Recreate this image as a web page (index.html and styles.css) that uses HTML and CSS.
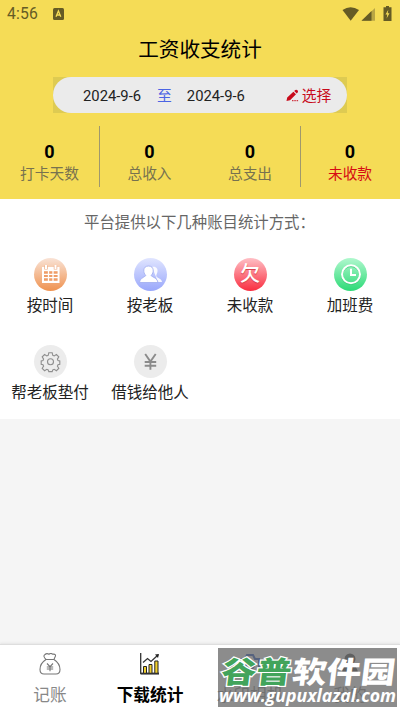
FILE: index.html
```html
<!DOCTYPE html>
<html lang="zh-CN">
<head>
<meta charset="utf-8">
<title>工资收支统计</title>
<link rel="stylesheet" href="styles.css">
</head>
<body>
<div class="app">
  <header class="header">
    <div class="status">
      <span class="time">4:56</span>
      <svg class="badge" width="11" height="12" viewBox="0 0 11 12"><rect width="11" height="12" rx="1.5" fill="#655b25"/><path d="M3 8.7 5.4 3 7.8 8.7M3.8 7h3.2" fill="none" stroke="#f5dc56" stroke-width="1.3"/></svg>
      <svg class="signals" width="52" height="16" viewBox="0 0 52 16"><path d="M.5 4Q8.500-1.500 17 4L8.700 14.700Z" fill="#655b25"/><path d="M19.500 14.700 33 2V14.700Z" fill="#b9a644"/><path d="M19.500 14.700 29.500 5V14.700Z" fill="#655b25"/><path d="M44 0h3v1.200h2.500V15h-8V1.200H44Z" fill="#655b25"/><path d="M46.300 3.700 43.500 8.500h1.800l-.7 4 2.900-5.300h-1.800Z" fill="#f5dc56"/></svg>
    </div>
    <h1 class="title">工资收支统计</h1>
    <div class="range-wrap">
      <div class="range">
        <span class="date">2024-9-6</span><span class="to">至</span><span class="date">2024-9-6</span>
        <svg class="pencil" width="13" height="13" viewBox="0 0 13 13"><path d="M.5 12 1.200 8.500 7.400 2.700 10 5.200 4 11.200ZM8.200 2 9.300 1Q10.500.2 11.500 1.200T11.700 3.500L10.700 4.500Z" fill="#c80b1b"/><path d="M6 11.700h6.500" stroke="#c80b1b" stroke-dasharray="1.500 .8"/></svg>
        <span class="pick">选择</span>
      </div>
    </div>
    <div class="stats">
      <div class="stat"><b>0</b><span>打卡天数</span></div>
      <div class="stat ruled"><b>0</b><span>总收入</span></div>
      <div class="stat"><b>0</b><span>总支出</span></div>
      <div class="stat ruled due"><b>0</b><span>未收款</span></div>
    </div>
  </header>
  <main class="methods">
    <p class="intro">平台提供以下几种账目统计方式：</p>
    <div class="grid">
      <div class="item"><div class="disc orange"><svg width="33" height="33" viewBox="0 0 33 33"><path d="M8 9h17.500v16H8Z" fill="#fff"/><path d="M10 13.200h13.600v9.600H10Z" fill="#ef9d67"/><path d="M10 16.400h14M10 19.600h14M14.500 13v10M19 13v10" stroke="#fff" stroke-width="1.300"/><path d="M12 7.500v4M21.500 7.500v4" stroke="#eeb18c" stroke-width="3.500"/><path d="M12 7v4M21.500 7v4" stroke="#fff" stroke-width="2"/></svg></div><span>按时间</span></div>
      <div class="item"><div class="disc blue"><svg width="33" height="33" viewBox="0 0 33 33"><path d="M18 9c4-1 6.500 2 5.300 5.500-.5 2-1.800 3-.5 4.500 2 1.500 5 2 5.200 5h-4" fill="#fff" opacity=".9"/><path d="M14.500 8c6 0 5.500 7 2.700 9.300-.7 1.300 6 2 6.800 7.200H5.500c.5-5 6.800-6 6.200-7.200C9 15 8.500 8 14.500 8Z" fill="#fff" stroke="#a4b0f1" stroke-width=".9"/></svg></div><span>按老板</span></div>
      <div class="item"><div class="disc red"><span class="owe">欠</span></div><span>未收款</span></div>
      <div class="item"><div class="disc green"><svg width="33" height="33" viewBox="0 0 33 33"><circle cx="17" cy="17" r="9" fill="none" stroke="#3bc878" stroke-width="2"/><circle cx="17" cy="16.300" r="9" fill="none" stroke="#fff" stroke-width="2"/><path d="M17 10.800V17h5" fill="none" stroke="#fff" stroke-width="2"/></svg></div><span>加班费</span></div>
      <div class="item"><div class="disc gray"><svg width="33" height="33" viewBox="0 0 33 33" fill="none" stroke="#8e8e8e" stroke-width="1.100"><path d="M14.800 7.800h3.400l.6 2.500 1.400.6 2.200-1.400 2.400 2.400-1.400 2.200.6 1.400 1.800.4v3.400l-1.800.4-.6 1.400 1.400 2.200-2.400 2.400-2.200-1.400-1.400.6-.6 1.700h-3.400l-.6-1.700-1.400-.6-2.200 1.400-2.400-2.400 1.400-2.200-.6-1.400-1.800-.4v-3.400l1.800-.4.6-1.400-1.400-2.200 2.400-2.400 2.200 1.400 1.400-.6Z"/><circle cx="16.500" cy="16.800" r="3"/></svg></div><span>帮老板垫付</span></div>
      <div class="item"><div class="disc gray"><svg width="33" height="33" viewBox="0 0 33 33"><path d="m11.200 9 5.200 7.500L21.700 9M16.400 16v8.800M10.700 17h11.500M10.700 20.800h11.500" fill="none" stroke="#8b8b8b" stroke-width="1.900"/></svg></div><span>借钱给他人</span></div>
    </div>
  </main>
  <nav class="tabs">
    <div class="tab"><svg width="22" height="22" viewBox="0 0 22 22" fill="none" stroke="#777" stroke-width="1.100"><path d="M7 6.500Q3.500 3 6 1.500 7.700-.2 10 1.200q2-1.500 3.500 0Q18 .7 15.800 4.500L15 6.500ZM7 6.500C3 9 1 12.500 1 16.500c0 3 1 4.500 4 4.500h12c3 0 4-1.500 4-4.500 0-4-3-8-6-10M8 10.500l3 3.200 3-3.200M11 13.700v4.500M7.800 14h6.400M7.800 16h6.400"/></svg><span>记账</span></div>
    <div class="tab active"><svg width="22" height="22" viewBox="0 0 22 22"><path d="M2 19.500h18V22H2Z" fill="#aaa"/><path d="M4.500 13.500h3v7h-3ZM10 11.500h3v9h-3ZM15.800 8h3.200v12.500h-3.200Z" fill="#f2d02c" stroke="#222"/><path d="M1.700 0v20.500H20M4 9.500 8.500 5.500 12 8.500l7-6.500" fill="none" stroke="#333" stroke-width="1.300"/><path d="m16 1.500 4-.5-1 4Z" fill="#222"/></svg><span>下载统计</span></div>
    <div class="tab"><svg width="22" height="22" viewBox="0 0 22 22" fill="none" stroke="#1d4fc4" stroke-width="2"><path d="M2 6h4l2-4h6l2 4h4v13H2Z"/><circle cx="11" cy="12" r="4"/></svg><span>水印相机</span></div>
    <div class="tab"><svg width="22" height="22" viewBox="0 0 22 22"><circle cx="11" cy="6" r="5.500" fill="#444"/><path d="M3 21q0-9 8-9t8 9Z" fill="#444"/></svg><span>我的</span></div>
  </nav>
  <div class="watermark">
    <svg width="179" height="59" viewBox="0 0 179 59">
      <g transform="translate(5.5 0) skewX(-7)">
        <text class="brand brand-green" x="1" y="35" textLength="70" lengthAdjust="spacingAndGlyphs">谷普</text>
        <text class="brand" x="72" y="35" textLength="103" lengthAdjust="spacingAndGlyphs">软件园</text>
      </g>
      <text class="site" x="1" y="53.500" textLength="177" lengthAdjust="spacingAndGlyphs">www.gupuxlazal.com</text>
    </svg>
  </div>
</div>
</body>
</html>
```

FILE: styles.css
```css
* { box-sizing: border-box; }
body { margin: 0; background: #f5f5f5; font-family: Roboto, "Noto Sans CJK SC", sans-serif; color: #222; }
svg { display: block; }
.app { position: relative; width: 400px; height: 711px; overflow: hidden; display: flex; flex-direction: column; }
.header { height: 199px; background: #f5dc56; flex: none; }
.status { height: 28px; display: flex; align-items: center; padding: 0 6px 0 7px; }
.time { font-size: 15.7px; line-height: 28px; color: #655b25; letter-spacing: .15px; }
.badge { margin-left: 15px; }
.signals { margin-left: auto; margin-top: -1px; }
.title { margin: 0; height: 41px; font-size: 20.6px; line-height: 45px; font-weight: 400; text-align: center; color: #000; }
.range-wrap { width: 294px; height: 36px; margin: 8px 0 0 53px; background: #decb52; }
.range { display: flex; align-items: center; height: 36px; padding-left: 30px; border-radius: 18px; background: #ebebeb; font-size: 14.8px; line-height: 38px; white-space: nowrap; }
.range span { padding-top: 1px; }
.date { width: 58px; }
.to { color: #4b64e4; margin: 0 15px 0 16px; }
.pencil { margin: 1px 3px 0 41px; }
.pick { color: #c80b1b; }
.stats { display: grid; grid-template-columns: 99px 101px 100px 100px; height: 61px; margin-top: 13px; }
.stat { display: flex; flex-direction: column; align-items: center; padding-top: 14.5px; }
.stat b { font-size: 18px; line-height: 22px; font-weight: 700; color: #000; }
.stat span { font-size: 14.7px; line-height: 23px; color: #77724f; }
.ruled { background: linear-gradient(#9f986d, #9f986d) left / 1px 100% no-repeat; }
.stat.due span { color: #d60b13; }
.methods { height: 220px; background: #fff; flex: none; }
.intro { margin: 0; padding-left: 84px; height: 59px; font-size: 15.4px; line-height: 48px; color: #666; white-space: nowrap; }
.grid { display: grid; grid-template-columns: repeat(4, 1fr); grid-auto-rows: 87px; }
.item { display: flex; flex-direction: column; align-items: center; font-size: 15.5px; line-height: 30px; white-space: nowrap; color: #222; }
.disc { width: 33px; height: 33px; border-radius: 50%; flex: none; }
.orange { background: linear-gradient(#f9e3d6, #ef9250); }
.blue { background: linear-gradient(#e0e5ff, #99a7fb); }
.red { background: linear-gradient(#ffbfc5, #f92e40); text-align: center; }
.green { background: linear-gradient(#b0f8ce, #2dda77); }
.gray { background: #ececec; }
.owe { display: block; font-size: 20px; line-height: 32px; font-weight: 500; color: #fff; text-shadow: 0 1px 1px #d33b48; }
.tabs { display: grid; grid-template-columns: repeat(4, 1fr); height: 67px; margin-top: auto; background: #fff; border-top: 1px solid #dedede; box-shadow: 0 -1px 2px #e5e5e5; }
.tab { display: flex; flex-direction: column; align-items: center; padding-top: 8px; font-size: 16.7px; line-height: 24px; color: #888; }
.tab span { margin-top: 9px; }
.tab.active { color: #000; font-weight: 700; }
.watermark { position: absolute; left: 218px; top: 648px; width: 179px; height: 59px; background: rgba(105, 105, 105, .77); }
.brand { font: 900 30px "Noto Sans CJK SC", sans-serif; fill: #fff; }
.brand-green { fill: #42a45b; stroke: #fff; stroke-width: 2.4px; paint-order: stroke; }
.site { font: italic 700 18px "Open Sans", sans-serif; fill: #fff; }
```
